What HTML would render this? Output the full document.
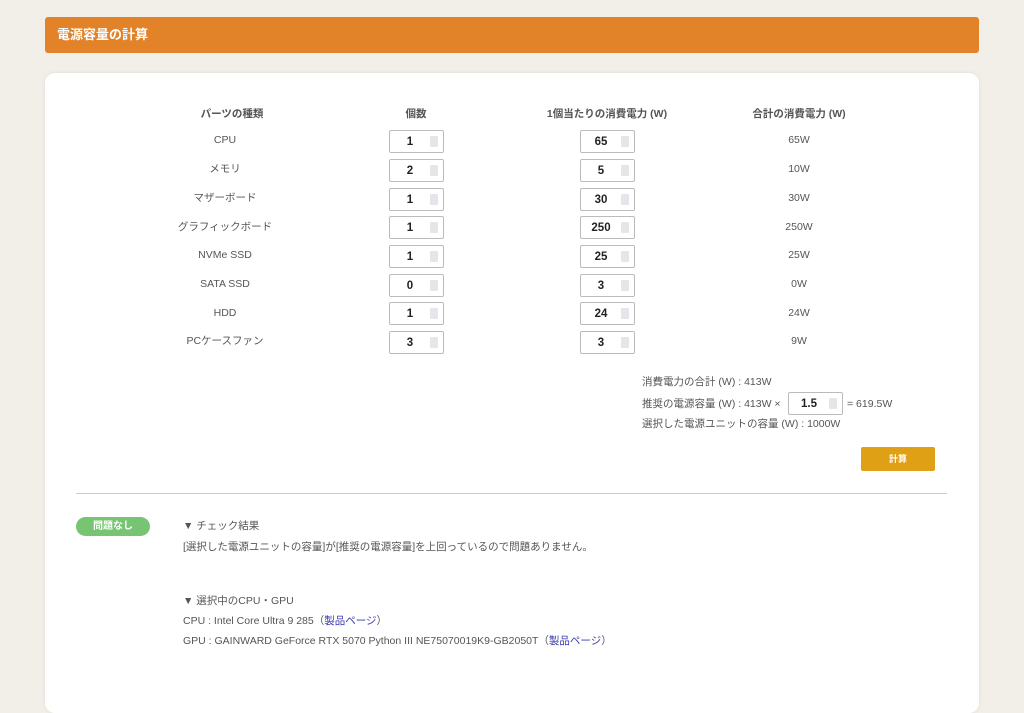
<!DOCTYPE html>
<html><head><meta charset="utf-8"><style>
body{margin:0;width:1024px;height:683px;background:#f2efe9;font-family:"Liberation Sans","Noto Sans CJK JP",sans-serif;position:relative;overflow:hidden;color:#555;font-size:10.5px}
.hdr{position:absolute;left:45px;top:17px;width:934px;height:36px;background:#e2832a;border-radius:3px;color:#fff;font-weight:bold;font-size:13px;line-height:36px;text-indent:12px}
.card{position:absolute;left:45px;top:73px;width:934px;height:640px;background:#fff;border-radius:10px;box-shadow:0 0 4px rgba(0,0,0,.08)}
.a{position:absolute;white-space:nowrap;line-height:14px}
.c{transform:translateX(-50%);text-align:center}
.th{font-weight:bold;color:#555}
.in{position:absolute;width:53px;height:21px;border:1px solid #bbb;border-radius:2px;background:#fff;color:#222;font-weight:bold;font-size:11.5px}
.in span{position:absolute;left:0;top:0;height:21px;line-height:23px;width:40px;text-align:center}
.in i{position:absolute;right:5px;top:5px;width:8px;height:11px;background:#e6e6ea;border-radius:1px}
.btn{position:absolute;left:861px;top:447px;width:74px;height:24px;background:#e0a015;border-radius:2px;color:#fff;font-weight:bold;font-size:9px;text-align:center;line-height:24px}
.hr{position:absolute;left:76px;top:493px;width:871px;height:1px;background:#ccc}
.badge{position:absolute;left:76px;top:517px;width:74px;height:19px;background:#77c473;border-radius:10px;color:#fff;font-weight:bold;font-size:10px;text-align:center;line-height:19px}
a{color:#3a3ab0}
</style></head><body>
<div class="hdr">電源容量の計算</div>
<div class="card"></div>
<div class="a c th" style="left:232px;top:107px">パーツの種類</div>
<div class="a c th" style="left:416px;top:107px">個数</div>
<div class="a c th" style="left:607px;top:107px">1個当たりの消費電力 (W)</div>
<div class="a c th" style="left:799px;top:107px">合計の消費電力 (W)</div>

<div class="a c" style="left:225px;top:133px">CPU</div>
<div class="a c" style="left:225px;top:162px">メモリ</div>
<div class="a c" style="left:225px;top:191px">マザーボード</div>
<div class="a c" style="left:225px;top:220px">グラフィックボード</div>
<div class="a c" style="left:225px;top:248px">NVMe SSD</div>
<div class="a c" style="left:225px;top:277px">SATA SSD</div>
<div class="a c" style="left:225px;top:306px">HDD</div>
<div class="a c" style="left:225px;top:334px">PCケースファン</div>

<div class="in" style="left:389px;top:130px"><span>1</span><i></i></div>
<div class="in" style="left:389px;top:159px"><span>2</span><i></i></div>
<div class="in" style="left:389px;top:188px"><span>1</span><i></i></div>
<div class="in" style="left:389px;top:216px"><span>1</span><i></i></div>
<div class="in" style="left:389px;top:245px"><span>1</span><i></i></div>
<div class="in" style="left:389px;top:274px"><span>0</span><i></i></div>
<div class="in" style="left:389px;top:302px"><span>1</span><i></i></div>
<div class="in" style="left:389px;top:331px"><span>3</span><i></i></div>

<div class="in" style="left:580px;top:130px"><span>65</span><i></i></div>
<div class="in" style="left:580px;top:159px"><span>5</span><i></i></div>
<div class="in" style="left:580px;top:188px"><span>30</span><i></i></div>
<div class="in" style="left:580px;top:216px"><span>250</span><i></i></div>
<div class="in" style="left:580px;top:245px"><span>25</span><i></i></div>
<div class="in" style="left:580px;top:274px"><span>3</span><i></i></div>
<div class="in" style="left:580px;top:302px"><span>24</span><i></i></div>
<div class="in" style="left:580px;top:331px"><span>3</span><i></i></div>

<div class="a c" style="left:799px;top:133px">65W</div>
<div class="a c" style="left:799px;top:162px">10W</div>
<div class="a c" style="left:799px;top:191px">30W</div>
<div class="a c" style="left:799px;top:220px">250W</div>
<div class="a c" style="left:799px;top:248px">25W</div>
<div class="a c" style="left:799px;top:277px">0W</div>
<div class="a c" style="left:799px;top:306px">24W</div>
<div class="a c" style="left:799px;top:334px">9W</div>

<div class="a" style="left:642px;top:375px">消費電力の合計 (W) : 413W</div>
<div class="a" style="left:642px;top:397px">推奨の電源容量 (W) : 413W ×</div>
<div class="in" style="left:788px;top:392px"><span>1.5</span><i></i></div>
<div class="a" style="left:847px;top:397px">= 619.5W</div>
<div class="a" style="left:642px;top:417px">選択した電源ユニットの容量 (W) : 1000W</div>
<div class="btn">計算</div>
<div class="hr"></div>
<div class="badge">問題なし</div>
<div class="a" style="left:183px;top:519px">▼ チェック結果</div>
<div class="a" style="left:183px;top:540px">[選択した電源ユニットの容量]が[推奨の電源容量]を上回っているので問題ありません。</div>
<div class="a" style="left:183px;top:594px">▼ 選択中のCPU・GPU</div>
<div class="a" style="left:183px;top:614px">CPU : Intel Core Ultra 9 285（<a>製品ページ</a>）</div>
<div class="a" style="left:183px;top:634px">GPU : GAINWARD GeForce RTX 5070 Python III NE75070019K9-GB2050T（<a>製品ページ</a>）</div>
</body></html>
